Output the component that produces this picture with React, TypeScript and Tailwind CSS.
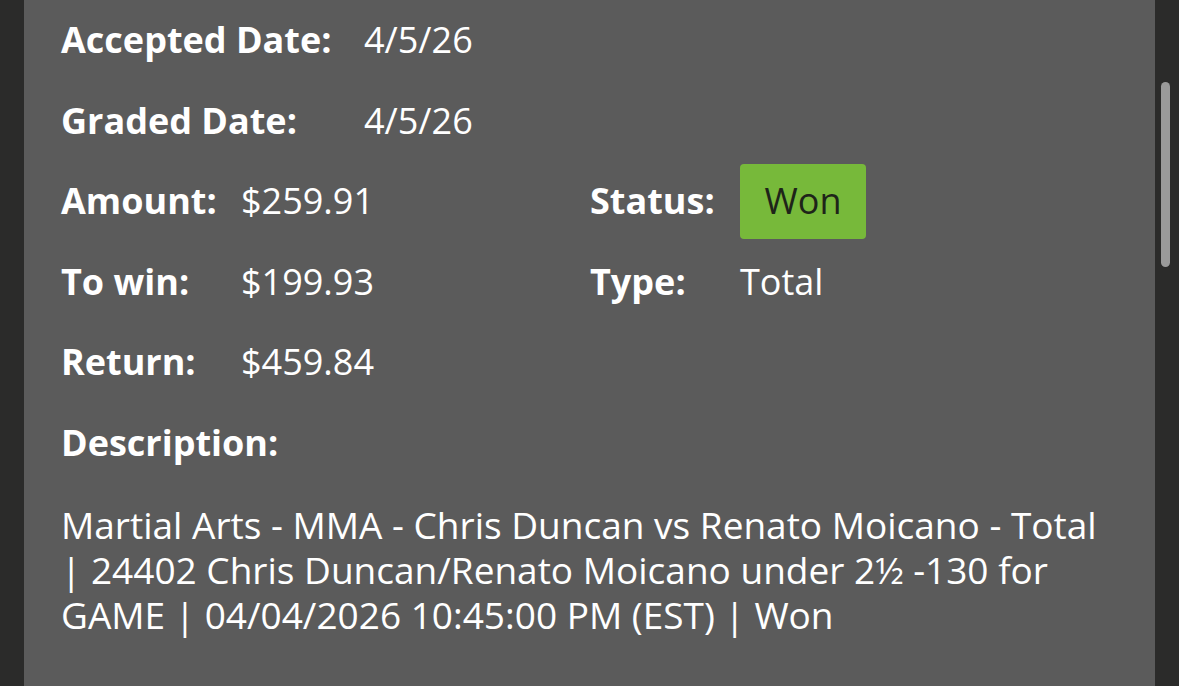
export default function App() {
  const font = { fontFamily: '"Open Sans", "Noto Sans", sans-serif' };
  return (
    <div className="flex h-[686px] w-[1179px] overflow-hidden bg-[#2b2b2a]" style={font}>
      <div className="w-[24px] shrink-0 bg-[#2b2b2a]" />
      <div className="w-[1131px] shrink-0 bg-[#5b5b5b] pl-[37px] pr-[37px] text-[36px] text-white">
        <div className="flex h-[80.5px] items-center">
          <div className="w-[303px] font-bold">Accepted Date:</div>
          <div>4/5/26</div>
        </div>
        <div className="flex h-[80.5px] items-center">
          <div className="w-[303px] font-bold">Graded Date:</div>
          <div>4/5/26</div>
        </div>
        <div className="flex h-[80.5px] items-center">
          <div className="w-[180px] font-bold">Amount:</div>
          <div className="w-[349px]">$259.91</div>
          <div className="w-[150px] font-bold">Status:</div>
          <div className="flex h-[75px] w-[126px] items-center justify-center rounded-[4px] bg-[#77b93a] text-[#1e2419]">Won</div>
        </div>
        <div className="flex h-[80.5px] items-center">
          <div className="w-[180px] font-bold">To win:</div>
          <div className="w-[349px]">$199.93</div>
          <div className="w-[150px] font-bold">Type:</div>
          <div>Total</div>
        </div>
        <div className="flex h-[80.5px] items-center">
          <div className="w-[180px] font-bold">Return:</div>
          <div>$459.84</div>
        </div>
        <div className="flex h-[80.5px] items-center">
          <div className="font-bold">Description:</div>
        </div>
        <p className="mt-[19px] w-[1050px] text-[37px] leading-[45px]">
          Martial Arts - MMA - Chris Duncan vs Renato Moicano - Total | 24402 Chris Duncan/Renato Moicano under 2½ -130 for GAME | 04/04/2026 10:45:00 PM (EST) | Won
        </p>
      </div>
      <div className="relative w-[24px] shrink-0 bg-[#2b2b2a]">
        <div className="absolute left-[6px] top-[82px] h-[185px] w-[9px] rounded-full bg-[#9a9a9a]" />
      </div>
    </div>
  );
}
